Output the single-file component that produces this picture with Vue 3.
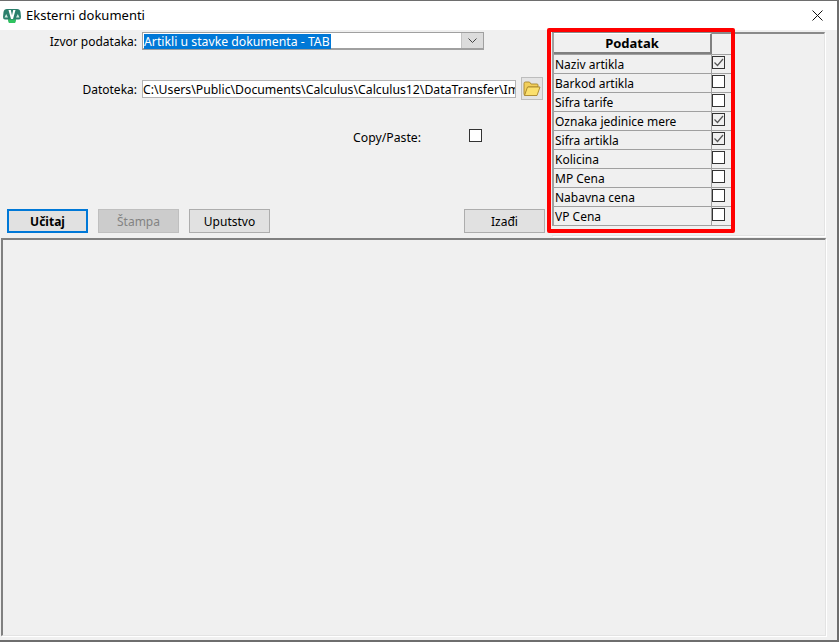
<script setup>
const rows = [
  { name: 'Naziv artikla', on: true },
  { name: 'Barkod artikla', on: false },
  { name: 'Sifra tarife', on: false },
  { name: 'Oznaka jedinice mere', on: true },
  { name: 'Sifra artikla', on: true },
  { name: 'Kolicina', on: false },
  { name: 'MP Cena', on: false },
  { name: 'Nabavna cena', on: false },
  { name: 'VP Cena', on: false }
]
</script>

<template>
  <div class="window">
    <header class="titlebar">
      <svg class="logo" width="18" height="16" viewBox="0 0 18 16">
        <path d="M4 1h10q3 0 3.500 3l.5 5q0 2.500-2 2.500h-3L12 15H6l-1-3.500H2Q0 11.500 0 9l.5-5Q1 1 4 1z" fill="#2b7f6c" />
        <path d="M5 11.500h8L12 15H6z" fill="#2fc45f" />
        <path d="M1.500 9.500h3.500L3.200 6zM13 9.500h3.500L14.800 6z" fill="#cfe8df" />
        <path d="M5.500 2h2.300L9 7.500 10.200 2h2.300L10 11H8z" fill="#ffffff" />
      </svg>
      <span class="title">Eksterni dokumenti</span>
      <svg class="close" width="11" height="11" viewBox="0 0 11 11">
        <path d="M.5.5l10 10M10.500.5l-10 10" stroke="#111" stroke-width="1" fill="none" />
      </svg>
    </header>

    <div class="top">
      <div class="form">
        <div class="row row-source">
          <label class="label">Izvor podataka:</label>
          <div class="combo">
            <span class="combo-value"><span class="selected">Artikli u stavke dokumenta - TAB</span></span>
            <span class="combo-arrow">
              <svg width="9" height="5" viewBox="0 0 9 5"><path d="M.5.500l4 4 4-4" stroke="#444" fill="none" /></svg>
            </span>
          </div>
        </div>

        <div class="row row-file">
          <label class="label">Datoteka:</label>
          <div class="path">C:\Users\Public\Documents\Calculus\Calculus12\DataTransfer\Im</div>
          <button class="folder">
            <svg width="18" height="16" viewBox="0 0 18 16">
              <path d="M1 2.500Q1 1 2.500 1h4l1.500 2h6q1 0 1 1v2H5L2 14H1.500Q1 14 1 13z" fill="#f2cf5b" stroke="#a8862a" stroke-width=".9" />
              <path d="M4.500 6H17l-3 8.500H1.500z" fill="#fbe06e" stroke="#a8862a" stroke-width=".9" />
            </svg>
          </button>
        </div>

        <div class="row row-copy">
          <label class="copy-label">Copy/Paste:</label>
          <span class="check"></span>
        </div>

        <div class="actions">
          <button class="btn primary">Učitaj</button>
          <button class="btn disabled">Štampa</button>
          <button class="btn">Uputstvo</button>
          <button class="btn exit">Izađi</button>
        </div>
      </div>

      <div class="side">
        <div class="grid">
          <div class="grid-head">
            <div class="head-cell">Podatak</div>
            <div class="head-blank"></div>
          </div>
          <div v-for="row in rows" :key="row.name" class="grid-row">
            <div class="name">{{ row.name }}</div>
            <div class="tick">
              <span class="check" :class="{ checked: row.on }">
                <svg v-if="row.on" width="11" height="11" viewBox="0 0 11 11">
                  <path d="M1.500 5.500l3 3 5.500-6.500" stroke="#555" stroke-width="1.200" fill="none" />
                </svg>
              </span>
            </div>
          </div>
        </div>
        <div class="highlight"></div>
      </div>
    </div>

    <div class="canvas"></div>
  </div>
</template>

<style>
html, body { margin: 0; background: #fff; }
</style>

<style scoped>
.window {
  width: 839px;
  height: 642px;
  box-sizing: border-box;
  display: flex;
  flex-direction: column;
  background: #f0f0f0;
  border-top: 1px solid #6e6e6e;
  border-right: 2px solid #6e6e6e;
  border-bottom: 2px solid #6e6e6e;
  font-family: "Noto Sans", sans-serif;
  font-size: 12.25px;
  color: #000;
  overflow: hidden;
}
.titlebar {
  height: 29px;
  flex: none;
  background: #fff;
  display: flex;
  align-items: center;
  padding: 0 14px 0 3px;
}
.logo { margin-top: 1px; }
.title { margin-left: 5px; font-size: 13px; line-height: 18px; margin-bottom: 2px; }
.close { margin-left: auto; margin-right: 0; }
.top { height: 208px; flex: none; display: flex; }
.form { width: 552px; flex: none; display: flex; flex-direction: column; }
.row { display: flex; align-items: center; }
.row-source { margin-top: 2px; height: 18px; }
.row-file { margin-top: 27px; height: 23px; }
.row-copy { margin-top: 29px; height: 13px; padding-left: 353px; }
.label { width: 137px; text-align: right; margin-right: 5px; flex: none; position: relative; top: 1px; font-size: 12px; }
.row-source .label { top: 0; }
.combo {
  width: 342px;
  height: 18px;
  box-sizing: border-box;
  border: 1px solid #a0a0a0;
  border-bottom-width: 2px;
  background: #fff;
  display: flex;
}
.combo-value { flex: 1; padding: 1px; display: flex; }
.selected {
  background: #0078d7;
  color: #fff;
  line-height: 16px;
  height: 15px;
  padding: 0 1px 0 0;
  white-space: nowrap;
}
.combo-arrow {
  width: 21px;
  background: #dcdcdc;
  border-left: 1px solid #c4c4c4;
  display: flex;
  align-items: center;
  justify-content: center;
}
.path {
  width: 374px;
  height: 18px;
  box-sizing: border-box;
  margin-top: 1px;
  border: 1px solid #b4b4b4;
  background: #fff;
  line-height: 18px;
  padding: 0;
  white-space: nowrap;
  overflow: hidden;
}
.folder {
  width: 22px;
  height: 23px;
  margin-left: 5px;
  padding: 0;
  box-sizing: border-box;
  border: 1px solid #bdbdbd;
  background: #e4e4e4;
  display: flex;
  align-items: center;
  justify-content: center;
}
.copy-label { width: 116px; flex: none; position: relative; top: 2px; }
.check {
  width: 13px;
  height: 13px;
  box-sizing: border-box;
  border: 1px solid #333;
  background: #fff;
  display: block;
  flex: none;
}
.check.checked { background: #f0f0f0; }
.check svg { display: block; margin: 0; }
.actions { margin-top: 67px; margin-left: 7px; display: flex; gap: 10px; }
.btn {
  width: 81px;
  height: 24px;
  box-sizing: border-box;
  border: 1px solid #adadad;
  background: #e1e1e1;
  font: inherit;
  font-size: 12px;
  color: #000;
  padding: 0;
}
.primary { border: 2px solid #0078d7; font-weight: 700; }
.disabled { background: #cccccc; border-color: #bfbfbf; color: #838383; }
.exit { margin-left: 184px; }
.side {
  position: relative;
  width: 273px;
  height: 204px;
  margin-top: 2px;
  box-sizing: border-box;
  background: #f0f0f0;
  border-top: 2px solid #8a8a8a;
  border-right: 1px solid #e3e3e3;
  border-bottom: 1px solid #e3e3e3;
  box-shadow: 1px 1px 0 #fff;
}
.grid {
  width: 180px;
  box-sizing: border-box;
  border-left: 2px solid #a0a0a0;
  border-right: 1px solid #a0a0a0;
  margin-top: -1px;
}
.grid-head { display: flex; height: 22px; border-bottom: 1px solid #a0a0a0; box-sizing: border-box; }
.head-cell {
  width: 158px;
  box-sizing: border-box;
  border-top: 1px solid #fff;
  border-right: 2px solid #808080;
  border-bottom: 2px solid #808080;
  background: #f0f0f0;
  font-weight: 700;
  text-align: center;
  line-height: 18px;
  font-size: 13px;
}
.head-blank { flex: 1; }
.grid-row { display: flex; height: 19px; box-sizing: border-box; border-bottom: 1px solid #a0a0a0; font-size: 12px; }
.name { width: 158px; box-sizing: border-box; padding-left: 1px; line-height: 20px; border-right: 1px solid #a0a0a0; white-space: nowrap; }
.tick { flex: 1; padding: 1px 0 0 0; }
.highlight {
  position: absolute;
  left: -5px;
  top: -6px;
  width: 188px;
  height: 205px;
  box-sizing: border-box;
  border: 4px solid #ff0000;
  border-radius: 2px;
}
.canvas {
  height: 398px;
  width: 825px;
  flex: none;
  margin-left: 1px;
  box-sizing: border-box;
  border-top: 2px solid #808080;
  border-left: 2px solid #808080;
  border-right: 1px solid #e3e3e3;
  border-bottom: 1px solid #e3e3e3;
  box-shadow: 1px 1px 0 #fff;
}
</style>
